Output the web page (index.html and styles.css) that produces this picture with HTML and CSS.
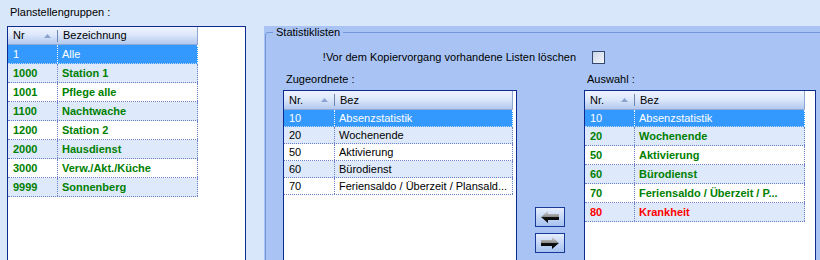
FILE: index.html
```html
<!DOCTYPE html>
<html lang="de">
<head>
<meta charset="utf-8">
<title>Planstellengruppen</title>
<link rel="stylesheet" href="styles.css">
</head>
<body>
<div class="app">
  <section class="left">
    <div class="caption">Planstellengruppen :</div>
    <div class="grid grid-left">
      <div class="thead">
        <div class="th c-nr">Nr <svg class="sort" width="7" height="4" viewBox="0 0 7 4"><polygon points="0,4 3.5,0 7,4" fill="#8ba3cf"/></svg></div>
        <div class="th c-bez last">Bezeichnung</div>
      </div>
      <div class="tr sel"><div class="td c-nr">1</div><div class="td c-bez">Alle</div></div>
      <div class="tr alt green"><div class="td c-nr">1000</div><div class="td c-bez">Station 1</div></div>
      <div class="tr green"><div class="td c-nr">1001</div><div class="td c-bez">Pflege alle</div></div>
      <div class="tr alt green"><div class="td c-nr">1100</div><div class="td c-bez">Nachtwache</div></div>
      <div class="tr green"><div class="td c-nr">1200</div><div class="td c-bez">Station 2</div></div>
      <div class="tr alt green"><div class="td c-nr">2000</div><div class="td c-bez">Hausdienst</div></div>
      <div class="tr green"><div class="td c-nr">3000</div><div class="td c-bez">Verw./Akt./Küche</div></div>
      <div class="tr alt green"><div class="td c-nr">9999</div><div class="td c-bez">Sonnenberg</div></div>
    </div>
  </section>

  <section class="panel">
    <fieldset class="group">
      <legend>Statistiklisten</legend>
      <div class="opt-row">
        <span class="opt-label">!Vor dem Kopiervorgang vorhandene Listen löschen</span>
        <span class="checkbox"></span>
      </div>
      <div class="lists">
        <div class="list-col mid">
          <div class="caption">Zugeordnete :</div>
          <div class="grid grid-mid">
            <div class="thead">
              <div class="th c-nr">Nr. <svg class="sort" width="7" height="4" viewBox="0 0 7 4"><polygon points="0,4 3.5,0 7,4" fill="#8ba3cf"/></svg></div>
              <div class="th c-bez last">Bez</div>
            </div>
            <div class="tr sel"><div class="td c-nr">10</div><div class="td c-bez">Absenzstatistik</div></div>
            <div class="tr alt"><div class="td c-nr">20</div><div class="td c-bez">Wochenende</div></div>
            <div class="tr"><div class="td c-nr">50</div><div class="td c-bez">Aktivierung</div></div>
            <div class="tr alt"><div class="td c-nr">60</div><div class="td c-bez">Bürodienst</div></div>
            <div class="tr"><div class="td c-nr">70</div><div class="td c-bez">Feriensaldo / Überzeit / Plansald...</div></div>
          </div>
        </div>

        <div class="btn-col">
          <button class="arrow-btn" type="button" aria-label="Zuordnen">
            <svg width="18" height="12" viewBox="0 0 18 12">
              <defs>
                <linearGradient id="ga" x1="0" y1="0" x2="0" y2="1">
                  <stop offset="0" stop-color="#d6d6d6"/>
                  <stop offset="0.48" stop-color="#8c8c8c"/>
                  <stop offset="0.52" stop-color="#111"/>
                  <stop offset="1" stop-color="#000"/>
                </linearGradient>
              </defs>
              <polygon points="0,6 7,0 7,3 18,3 18,9 7,9 7,12" fill="url(#ga)"/>
            </svg>
          </button>
          <button class="arrow-btn" type="button" aria-label="Entfernen">
            <svg width="18" height="12" viewBox="0 0 18 12">
              <polygon points="18,6 11,0 11,3 0,3 0,9 11,9 11,12" fill="url(#ga)"/>
            </svg>
          </button>
        </div>

        <div class="list-col right">
          <div class="caption">Auswahl :</div>
          <div class="grid grid-right">
            <div class="thead">
              <div class="th c-nr">Nr. <svg class="sort" width="7" height="4" viewBox="0 0 7 4"><polygon points="0,4 3.5,0 7,4" fill="#8ba3cf"/></svg></div>
              <div class="th c-bez last">Bez</div>
            </div>
            <div class="tr sel"><div class="td c-nr">10</div><div class="td c-bez">Absenzstatistik</div></div>
            <div class="tr alt green"><div class="td c-nr">20</div><div class="td c-bez">Wochenende</div></div>
            <div class="tr green"><div class="td c-nr">50</div><div class="td c-bez">Aktivierung</div></div>
            <div class="tr alt green"><div class="td c-nr">60</div><div class="td c-bez">Bürodienst</div></div>
            <div class="tr green"><div class="td c-nr">70</div><div class="td c-bez">Feriensaldo / Überzeit / P...</div></div>
            <div class="tr alt red"><div class="td c-nr">80</div><div class="td c-bez">Krankheit</div></div>
          </div>
        </div>
      </div>
    </fieldset>
  </section>
</div>
</body>
</html>
```

FILE: styles.css
```css
html, body {
  margin: 0;
  padding: 0;
}

body {
  width: 820px;
  height: 260px;
  overflow: hidden;
  background: #d8e7f9;
  font: 11px/13px "Liberation Sans", Arial, sans-serif;
  color: #000;
}

.app {
  display: flex;
  height: 260px;
  align-items: flex-start;
}

.caption {
  height: 13px;
  white-space: nowrap;
}

/* left column */
.left {
  width: 239px;
  margin-left: 7px;
  padding-top: 6px;
  flex: none;
}

.left .caption {
  margin-left: 3px;
  margin-bottom: 7px;
}

/* grids */
.grid {
  border: 1px solid #0b2c8e;
  background: #fff;
  height: 260px;
  box-sizing: border-box;
  overflow: hidden;
}

.thead {
  display: flex;
  background: linear-gradient(#eef3fd, #dde8fb 45%, #b3c8ee);
  border-bottom: 1px solid #8fa9d9;
  box-sizing: border-box;
}

.th {
  box-sizing: border-box;
  padding-left: 5px;
  white-space: nowrap;
  display: flex;
  align-items: center;
}

.th.c-nr {
  justify-content: space-between;
  padding-right: 7px;
  background: linear-gradient(#6f85b2, #6f85b2) right center / 1px 12px no-repeat;
}

.th.last {
  border-right: 1px solid #8ea6d4;
}

.sort {
  display: block;
}

.tr {
  display: flex;
  box-sizing: border-box;
  border-bottom: 1px dotted #6a80c8;
  white-space: nowrap;
}

.tr.alt {
  background: #deeafb;
}

.tr.sel {
  background: #3399ff;
  color: #fff;
  border-bottom-color: #b8d4f7;
}

.td {
  box-sizing: border-box;
  border-right: 1px dotted #6a80c8;
  overflow: hidden;
  padding-left: 4px;
}

.td.c-nr {
  padding-left: 5px;
}

.tr.sel .td {
  border-right-color: #fff;
}

.tr.green {
  color: #008000;
  font-weight: bold;
}

.tr.red {
  color: #ff0000;
  font-weight: bold;
}

/* left grid dimensions */
.grid-left .thead {
  width: 190px;
  height: 18px;
}

.grid-left .tr {
  width: 190px;
  height: 19px;
  line-height: 18px;
}

.grid-left .c-nr { width: 50px; }
.grid-left .c-bez { width: 140px; }

/* middle grid */
.grid-mid .thead {
  width: 229px;
  height: 19px;
}

.grid-mid .tr {
  width: 229px;
  height: 17px;
  line-height: 16px;
}

.grid-mid .c-nr { width: 51px; }
.grid-mid .c-bez { width: 178px; }

/* right grid */
.grid-right .thead {
  width: 220px;
  height: 19px;
}

.grid-right .tr {
  width: 220px;
  height: 19px;
  line-height: 18px;
}

.grid-right .tr.sel {
  height: 17px;
  line-height: 16px;
}

.grid-right .c-nr { width: 50px; }
.grid-right .c-bez { width: 170px; }

/* right panel */
.panel {
  flex: 1;
  margin-left: 18px;
  margin-top: 26px;
  height: 234px;
  background: #a9c4f4;
  overflow: hidden;
}

.group {
  margin: 0 0 0 1px;
  padding: 0;
  border: 1px solid #7597d9;
  border-radius: 3px;
  width: 580px;
  height: 300px;
  min-width: 0;
  box-sizing: border-box;
}

.group legend {
  margin-left: 7px;
  padding: 0 3px;
  line-height: 13px;
  height: 13px;
}

.opt-row {
  display: flex;
  align-items: center;
  height: 13px;
  margin-top: 12px;
  padding-left: 17px;
}

.opt-label {
  width: 293px;
  text-align: right;
  white-space: nowrap;
}

.checkbox {
  width: 13px;
  height: 13px;
  box-sizing: border-box;
  margin-left: 16px;
  border: 1px solid #34486f;
  background: linear-gradient(135deg, #cbd5e7, #f3f6fb);
}

.lists {
  display: flex;
  align-items: flex-start;
  margin-top: 9px;
  padding-left: 17px;
}

.list-col .caption {
  margin-left: 3px;
  margin-bottom: 4px;
}

.list-col.mid {
  width: 234px;
  flex: none;
}

.list-col.right {
  width: 232px;
  flex: none;
  margin-left: 19px;
}

.btn-col {
  width: 30px;
  flex: none;
  margin-left: 18px;
  padding-top: 134px;
  display: flex;
  flex-direction: column;
  gap: 6px;
}

.arrow-btn {
  width: 30px;
  height: 20px;
  padding: 0;
  margin: 0;
  box-sizing: border-box;
  border: 1px solid #173a99;
  border-radius: 0;
  background: linear-gradient(#e6eefc, #c6d7f5 50%, #a6c2f0);
  display: flex;
  align-items: center;
  justify-content: center;
}

.arrow-btn svg {
  display: block;
}
```
